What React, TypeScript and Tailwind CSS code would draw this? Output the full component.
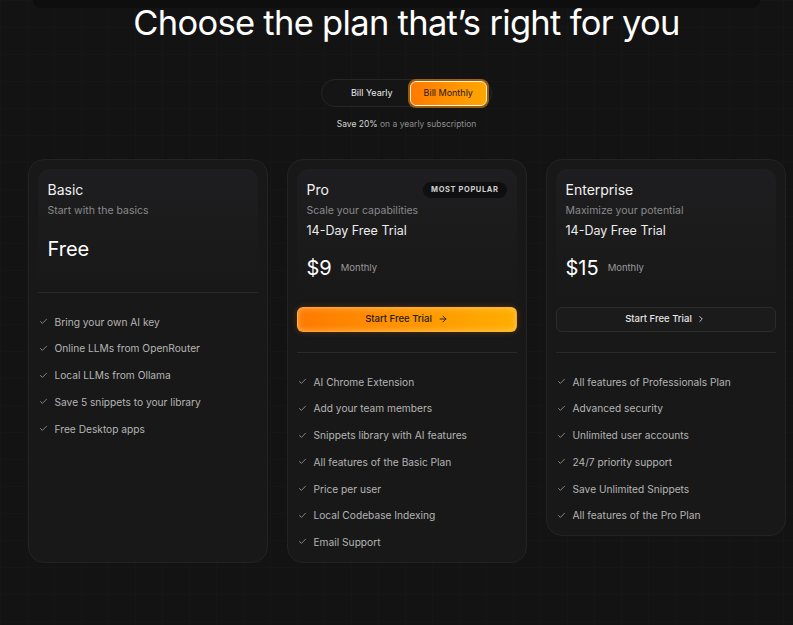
import { Check, ArrowRight, ChevronRight } from "lucide-react";

type Plan = {
  name: string;
  tagline: string;
  trial?: string;
  price: string;
  period?: string;
  badge?: string;
  cta?: "primary" | "secondary";
  features: string[];
  stretch: boolean;
};

const plans: Plan[] = [
  {
    name: "Basic",
    tagline: "Start with the basics",
    price: "Free",
    features: [
      "Bring your own AI key",
      "Online LLMs from OpenRouter",
      "Local LLMs from Ollama",
      "Save 5 snippets to your library",
      "Free Desktop apps",
    ],
    stretch: true,
  },
  {
    name: "Pro",
    tagline: "Scale your capabilities",
    trial: "14-Day Free Trial",
    price: "$9",
    period: "Monthly",
    badge: "Most popular",
    cta: "primary",
    features: [
      "AI Chrome Extension",
      "Add your team members",
      "Snippets library with AI features",
      "All features of the Basic Plan",
      "Price per user",
      "Local Codebase Indexing",
      "Email Support",
    ],
    stretch: true,
  },
  {
    name: "Enterprise",
    tagline: "Maximize your potential",
    trial: "14-Day Free Trial",
    price: "$15",
    period: "Monthly",
    cta: "secondary",
    features: [
      "All features of Professionals Plan",
      "Advanced security",
      "Unlimited user accounts",
      "24/7 priority support",
      "Save Unlimited Snippets",
      "All features of the Pro Plan",
    ],
    stretch: false,
  },
];

function PlanCard({ plan }: { plan: Plan }) {
  return (
    <div
      className={`w-[240px] shrink-0 rounded-[16px] border border-[#232323] bg-[#181818] p-[9px] ${
        plan.stretch ? "self-stretch" : "self-start"
      }`}
    >
      {/* Header panel */}
      <div className="rounded-[12px] bg-gradient-to-b from-[#1e1e20] via-[#1b1b1c] to-[#181818] px-[10px] pt-[11px]">
        <div className="flex items-center justify-between">
          <span className="text-[14px] leading-[20px] text-[#f2f2f2]">{plan.name}</span>
          {plan.badge && (
            <span className="rounded-full bg-[#0f0f0f] px-[8px] py-[3px] text-[7.5px] font-bold uppercase leading-[10px] tracking-[0.08em] text-[#cfcfcf]">
              {plan.badge}
            </span>
          )}
        </div>
        <p className="mt-[3px] text-[10.5px] leading-[16px] text-[#8a8a8a]">{plan.tagline}</p>
        {plan.trial && (
          <p className="mt-[3px] text-[12.5px] leading-[18px] text-[#ededed]">{plan.trial}</p>
        )}
        <div className={`flex items-center gap-[9px] ${plan.trial ? "mt-[14px] pb-[25px]" : "mt-[16px] pb-[29px]"}`}>
          <span className="text-[20px] leading-[28px] text-white">{plan.price}</span>
          {plan.period && <span className="text-[9.5px] text-[#9a9a9a]">{plan.period}</span>}
        </div>
      </div>

      {plan.cta === "primary" && (
        <button className="flex h-[25px] w-full items-center justify-center gap-[6px] rounded-[6px] border border-[#ffc04d]/60 bg-gradient-to-r from-[#ff7a00] to-[#ffae00] text-[9.5px] font-medium text-[#1a1a1a] shadow-[inset_0_0_6px_rgba(255,255,255,0.35),0_0_6px_rgba(255,140,0,0.25)]">
          Start Free Trial
          <ArrowRight size={10} strokeWidth={2.2} />
        </button>
      )}
      {plan.cta === "secondary" && (
        <button className="flex h-[25px] w-full items-center justify-center gap-[4px] rounded-[6px] border border-[#2c2c2c] bg-[#1b1b1b] text-[9.5px] font-medium text-[#e6e6e6]">
          Start Free Trial
          <ChevronRight size={10} strokeWidth={2} />
        </button>
      )}

      <div className={`h-px bg-[#2a2a2a] ${plan.cta ? "mt-[20px]" : ""}`} />

      <ul className="mt-[21px] flex flex-col gap-[10.7px] pl-[1px] pb-[3px]">
        {plan.features.map((f) => (
          <li key={f} className="flex items-center gap-[7px] text-[10.2px] leading-[16px] text-[#b5b5b5]">
            <Check size={9} strokeWidth={2} className="shrink-0 text-[#a8a8a8]" />
            {f}
          </li>
        ))}
      </ul>
    </div>
  );
}

export default function App() {
  return (
    <div
      className="min-h-[625px] w-full overflow-hidden bg-[#131313] bg-[linear-gradient(to_right,#161616_1px,transparent_1px),linear-gradient(to_bottom,#161616_1px,transparent_1px)] bg-[size:27px_27px] pb-[60px]"
      style={{ fontFamily: "Inter, 'Noto Sans', sans-serif" }}
    >
      {/* Bottom of the nav bar */}
      <div className="mx-[33px] h-[8px] rounded-b-[14px] bg-[#0e0e0e]" />

      <div className="flex flex-col items-center pl-[20px]">
        <h1 className="-mt-[5px] text-[34.5px] leading-[40px] tracking-[-0.02em] text-white">
          Choose the plan that’s right for you
        </h1>

        {/* Billing toggle */}
        <div className="mt-[36px] flex h-[28px] w-[171px] items-center rounded-full border border-[#262626] bg-[#151515] pl-[12px] pr-[4px]">
          <span className="w-[76px] text-center text-[9px] text-[#ececec]">Bill Yearly</span>
          <span className="ml-auto flex h-[25px] w-[78px] items-center justify-center rounded-[6px] border border-[#fff1dc] bg-gradient-to-r from-[#ff7a00] to-[#ffa600] text-[9px] text-[#1a1a1a] shadow-[0_0_0_2px_rgba(255,150,0,0.55)]">
            Bill Monthly
          </span>
        </div>
        <p className="mt-[11px] text-[8.5px] text-[#8e8e8e]">
          <span className="text-[#d6d6d6]">Save 20%</span> on a yearly subscription
        </p>

        <div className="mt-[28px] flex items-stretch gap-[19px]">
          {plans.map((p) => (
            <PlanCard key={p.name} plan={p} />
          ))}
        </div>
      </div>
    </div>
  );
}
